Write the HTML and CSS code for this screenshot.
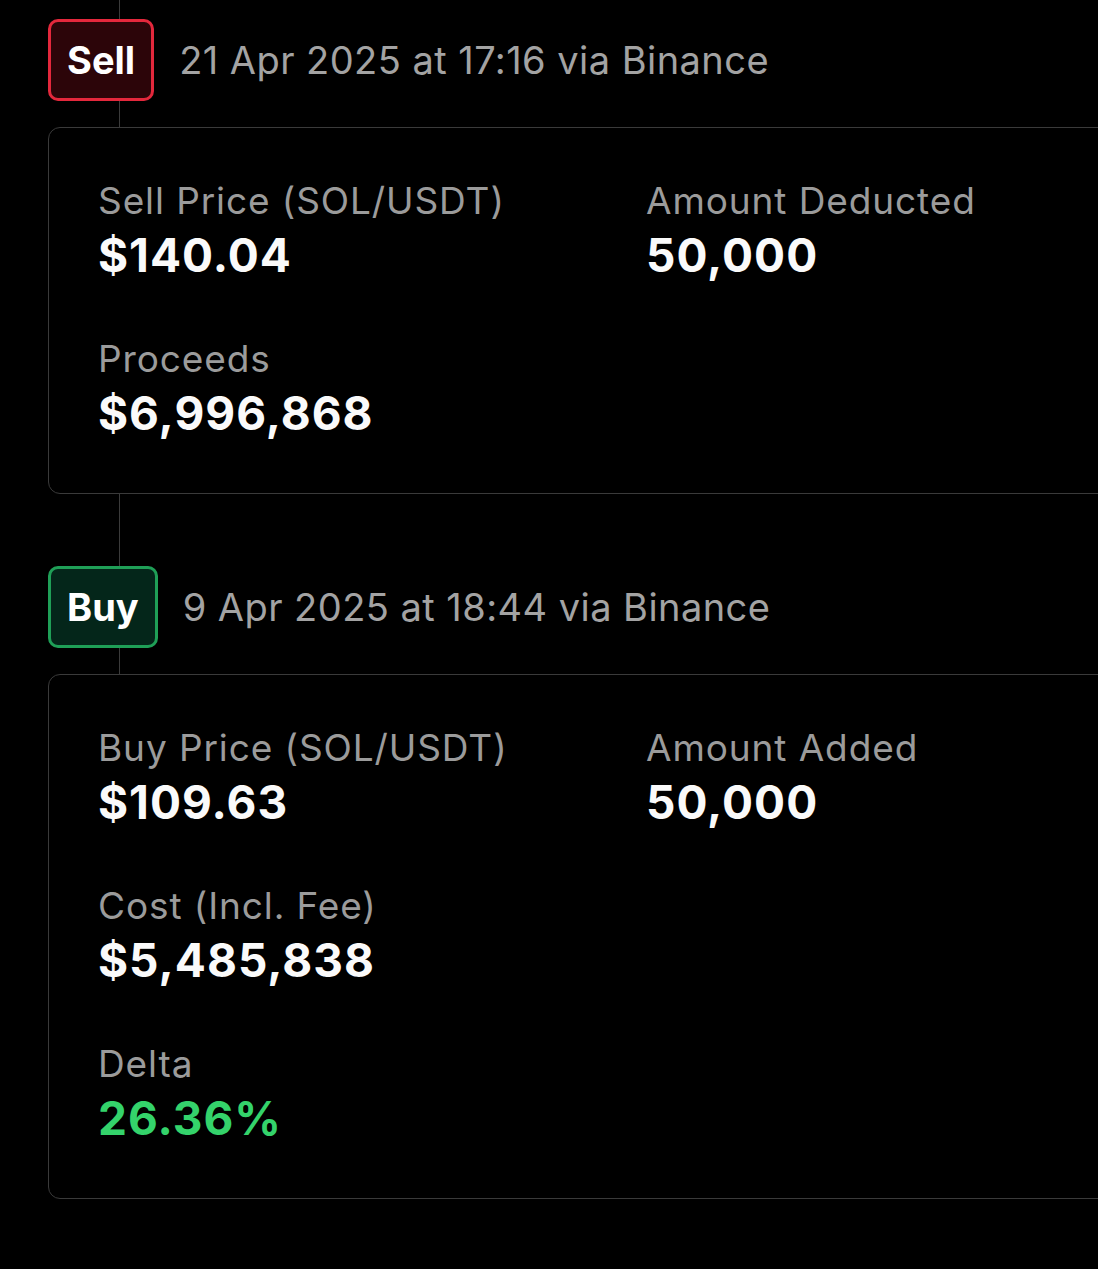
FILE: index.html
```html
<!DOCTYPE html>
<html lang="en">
<head>
	<meta charset="UTF-8">
	<title>Trades</title>
	<link rel="stylesheet" href="styles.css">
</head>
<body>
	<div class="timeline">
		<div class="entry">
			<div class="entry-head">
				<span class="tag tag-sell">Sell</span>
				<span class="when">21 Apr 2025 at 17:16 via Binance</span>
			</div>
			<div class="card">
				<div class="field">
					<div class="label">Sell Price (SOL/USDT)</div>
					<div class="value">$140.04</div>
				</div>
				<div class="field">
					<div class="label">Amount Deducted</div>
					<div class="value">50,000</div>
				</div>
				<div class="field">
					<div class="label">Proceeds</div>
					<div class="value">$6,996,868</div>
				</div>
			</div>
		</div>

		<div class="entry">
			<div class="entry-head">
				<span class="tag tag-buy">Buy</span>
				<span class="when">9 Apr 2025 at 18:44 via Binance</span>
			</div>
			<div class="card">
				<div class="field">
					<div class="label">Buy Price (SOL/USDT)</div>
					<div class="value">$109.63</div>
				</div>
				<div class="field">
					<div class="label">Amount Added</div>
					<div class="value">50,000</div>
				</div>
				<div class="field">
					<div class="label">Cost (Incl. Fee)</div>
					<div class="value">$5,485,838</div>
				</div>
				<div class="field"></div>
				<div class="field">
					<div class="label">Delta</div>
					<div class="value up">26.36%</div>
				</div>
			</div>
		</div>
	</div>
</body>
</html>
```

FILE: styles.css
```css
*{padding: 0;margin: 0;box-sizing: border-box;}
html{
	overflow-x: hidden;
}
body{
	background-color: #000;
	font-family: Inter, "Noto Sans", sans-serif;
	color: #f5f5f5;
}

.timeline{
	position: relative;
	padding: 19px 0 0 48px;
}
/* vertical line behind the entries */
.timeline:before{
	content: "";
	position: absolute;
	left: 119px;
	top: 0;
	height: 680px;
	width: 1px;
	background-color: #3b3b3b;
}

.entry{
	position: relative;
	margin-bottom: 72px;
}
.entry-head{
	display: flex;
	align-items: center;
	gap: 25px;
	height: 82px;
	margin-bottom: 26px;
}
.tag{
	display: flex;
	align-items: center;
	justify-content: center;
	height: 82px;
	padding: 0 16px;
	border: 3px solid;
	border-radius: 10px;
	font-size: 38px;
	font-weight: 700;
	color: #fff;
}
.tag-sell{
	border-color: #e3283c;
	background-color: #2c0509;
}
.tag-buy{
	border-color: #1f9f57;
	background-color: #04261a;
}
.when{
	font-size: 38px;
	letter-spacing: 0.45px;
	color: #a3a3a3;
}

.card{
	position: relative;
	background-color: #000;
	border: 1px solid #3a3a3a;
	border-radius: 12px;
	margin-right: -40px;
	padding: 51px 0 53px 49px;
	display: grid;
	grid-template-columns: 548px 1fr;
	row-gap: 55px;
}
.label{
	font-size: 37px;
	line-height: 44px;
	letter-spacing: 0.9px;
	color: #9b9b9b;
}
.value{
	margin-top: 5px;
	font-size: 46px;
	line-height: 54px;
	font-weight: 700;
	letter-spacing: 1px;
	color: #fafafa;
}
.value.up{
	color: #34d36b;
}
```
